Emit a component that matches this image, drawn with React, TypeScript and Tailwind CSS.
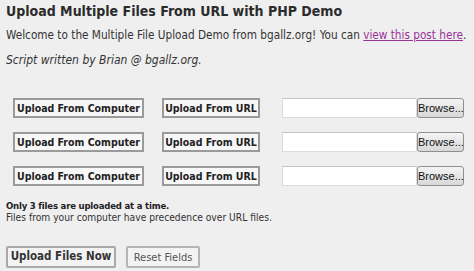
import React from 'react'

const font = { fontFamily: '"DejaVu Sans Condensed", "DejaVu Sans", Verdana, sans-serif' }

function UploadRow() {
  return (
    <div className="flex items-center h-[20px]">
      <button className="ml-[13px] w-[131px] h-[20px] border-2 border-[#9a9a9a] bg-[#f7f7f7] text-[10.5px] font-bold text-[#222] leading-none whitespace-nowrap">
        Upload From Computer
      </button>
      <button className="ml-[18px] w-[98px] h-[20px] border-2 border-[#9a9a9a] bg-[#f7f7f7] text-[10.5px] font-bold text-[#222] leading-none whitespace-nowrap">
        Upload From URL
      </button>
      <div className="ml-[22px] w-[135px] h-[20px] bg-white border border-[#dcdcdc] border-t-[#c4c4c4]" />
      <button
        className="w-[47px] h-[20px] rounded-[3px] border border-[#8e8f8f] bg-gradient-to-b from-[#f4f4f4] to-[#d8d8d8] text-[11px] text-[#111] leading-none whitespace-nowrap"
        style={{ fontFamily: '"Liberation Sans", Arial, sans-serif' }}
      >
        Browse...
      </button>
    </div>
  )
}

export default function App() {
  return (
    <div className="w-[474px] h-[271px] bg-[#efefef] text-[#333] overflow-hidden" style={font}>
      <div className="px-[6px] pt-[1px]">
        <h1 className="text-[14px] font-bold leading-[20px] text-[#2b2b2b] whitespace-nowrap">
          Upload Multiple Files From URL with PHP Demo
        </h1>
        <p className="mt-[6px] text-[11.7px] leading-[16px] whitespace-nowrap">
          Welcome to the Multiple File Upload Demo from bgallz.org! You can{' '}
          <a className="text-[#993399] underline">view this post here</a>.
        </p>
        <p className="mt-[9px] text-[12px] leading-[16px] italic">Script written by Brian @ bgallz.org.</p>
      </div>

      <div className="mt-[30px] flex flex-col gap-[14px]">
        <UploadRow />
        <UploadRow />
        <UploadRow />
      </div>

      <div className="px-[6px] mt-[14px] leading-[12px]">
        <p className="text-[9.5px] tracking-[-0.2px] font-bold text-[#222] whitespace-nowrap">
          Only 3 files are uploaded at a time.
        </p>
        <p className="text-[10.2px] whitespace-nowrap">Files from your computer have precedence over URL files.</p>
      </div>

      <div className="px-[6px] mt-[22px] flex gap-[10px]">
        <button className="w-[110px] h-[22px] border-2 border-[#a8a8a8] rounded-[2px] bg-[#f3f3f3] text-[11.5px] font-bold text-[#333] leading-none whitespace-nowrap">
          Upload Files Now
        </button>
        <button className="w-[74px] h-[22px] border-2 border-[#b5b5b5] rounded-[2px] bg-[#f3f3f3] text-[11px] text-[#555] leading-none whitespace-nowrap">
          Reset Fields
        </button>
      </div>
    </div>
  )
}
